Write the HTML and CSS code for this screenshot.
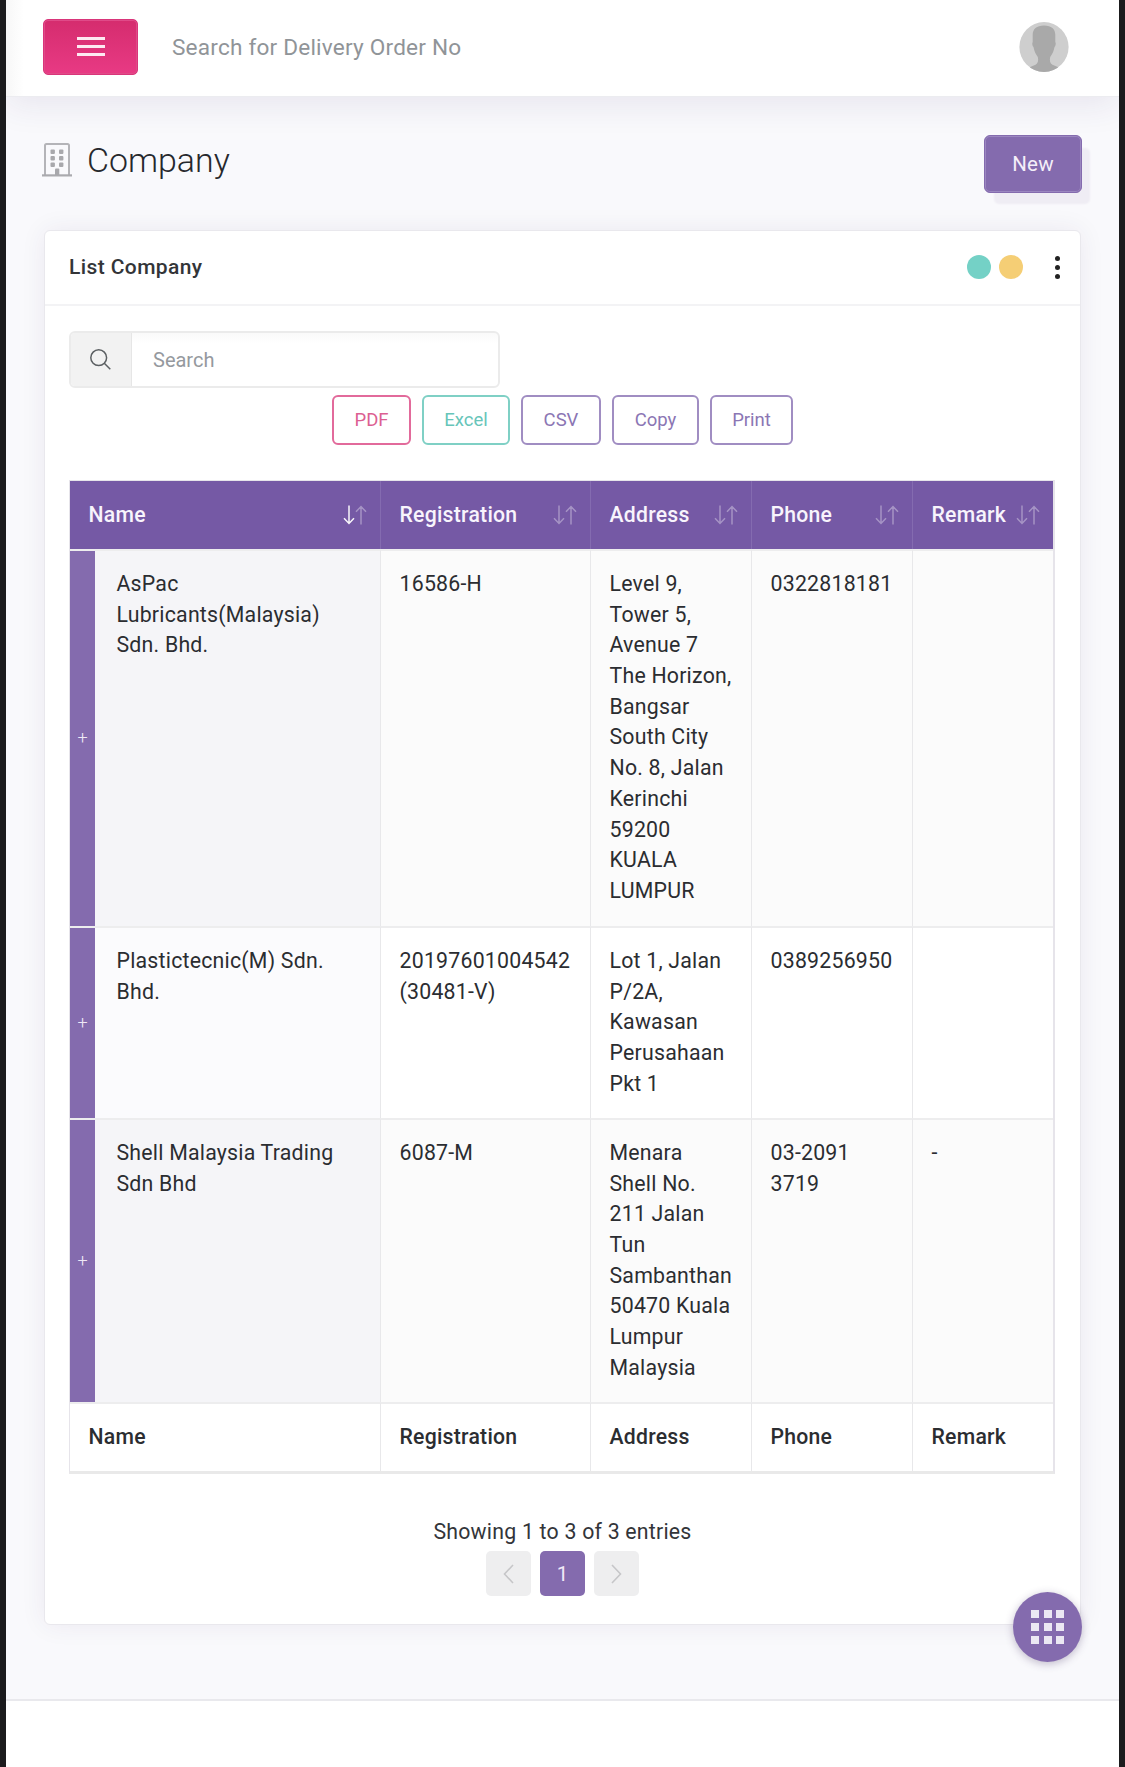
FILE: index.html
```html
<!DOCTYPE html>
<html lang="en">
<head>
<meta charset="utf-8">
<title>Company</title>
<link rel="stylesheet" href="styles.css">
</head>
<body>
<svg class="defs" width="0" height="0" aria-hidden="true">
  <symbol id="down" viewBox="0 0 12 20"><path d="M6 .5v18M1 13.2l5 5.3 5-5.3"/></symbol>
  <symbol id="up" viewBox="0 0 12 20"><path d="M6 19.5v-18M1 6.8l5-5.3 5 5.3"/></symbol>
</svg>
<div class="page">
  <header class="topbar">
    <button class="menu" aria-label="Menu"><span></span><span></span><span></span></button>
    <span class="topsearch">Search for Delivery Order No</span>
    <svg class="avatar" viewBox="0 0 50 50">
      <clipPath id="round"><ellipse cx="25" cy="25" rx="24.600" ry="24.900"/></clipPath>
      <g clip-path="url(#round)">
        <rect width="50" height="50" fill="#cecece"/>
        <path fill="#a9a9a9" d="M25 3.500C17.500 3.500 13.700 7 13.700 13v7c-.8.6-.5 4 .8 5 .6 4 2.200 7 4.300 10 .8 3.500.2 6.500-2.300 7.800L10 45.500V50h30v-4.500l-6.500-2.700c-2.500-1.300-3.100-4.300-2.300-7.800 2.100-3 3.700-6 4.300-10 1.300-1 1.600-4.400.8-5v-7c0-6-3.800-9.500-11.300-9.500z"/>
      </g>
    </svg>
  </header>

  <main class="main">
    <div class="titlebar">
      <svg class="building" viewBox="0 0 30 35">
        <path fill="none" stroke="#b4b4b8" stroke-width="2" d="M3 33V3.500Q3 2 4.500 2h21Q27 2 27 3.500V33"/>
        <path stroke="#aaaaae" stroke-width="2.200" d="M0 33.400h30"/>
        <g fill="#a8a8ac">
          <rect x="8.500" y="7.500" width="4.400" height="4.600" rx="1"/><rect x="17" y="7.500" width="4.400" height="4.600" rx="1"/>
          <rect x="8.500" y="14" width="4.400" height="4.600" rx="1"/><rect x="17" y="14" width="4.400" height="4.600" rx="1"/>
          <rect x="8.500" y="20.400" width="4.400" height="4.600" rx="1"/><rect x="17" y="20.400" width="4.400" height="4.600" rx="1"/>
          <path d="M13 33v-5.500q0-1 1-1h2.300q1 0 1 1V33z"/>
        </g>
      </svg>
      <h1>Company</h1>
      <button class="new">New</button>
    </div>

    <section class="card">
      <div class="card-head">
        <h2>List Company</h2>
        <i class="dot teal"></i><i class="dot amber"></i>
        <div class="kebab"><i></i><i></i><i></i></div>
      </div>

      <div class="search">
        <span class="search-icon"><svg width="21" height="21" viewBox="0 0 21 21"><circle cx="8.700" cy="8.700" r="7.900"/><path d="M14.300 14.300l6 6"/></svg></span>
        <span class="search-text">Search</span>
      </div>

      <div class="exports">
        <button class="pink w-pdf">PDF</button><button class="green w-excel">Excel</button><button class="w-csv">CSV</button><button class="w-copy">Copy</button><button class="w-print">Print</button>
      </div>

      <table class="grid">
        <colgroup><col class="c1"><col class="c2"><col class="c3"><col class="c4"><col class="c5"></colgroup>
        <thead>
          <tr>
            <th><div>Name<span class="sort"><svg class="on"><use href="#down"/></svg><svg><use href="#up"/></svg></span></div></th>
            <th><div>Registration<span class="sort"><svg><use href="#down"/></svg><svg><use href="#up"/></svg></span></div></th>
            <th><div>Address<span class="sort"><svg><use href="#down"/></svg><svg><use href="#up"/></svg></span></div></th>
            <th><div>Phone<span class="sort"><svg><use href="#down"/></svg><svg><use href="#up"/></svg></span></div></th>
            <th><div>Remark<span class="sort"><svg><use href="#down"/></svg><svg><use href="#up"/></svg></span></div></th>
          </tr>
        </thead>
        <tbody>
          <tr class="r1">
            <td class="name"><span class="expand">+</span>AsPac<br>Lubricants(Malaysia)<br>Sdn. Bhd.</td>
            <td>16586-H</td>
            <td>Level 9,<br>Tower 5,<br>Avenue 7<br>The Horizon,<br>Bangsar<br>South City<br>No. 8, Jalan<br>Kerinchi<br>59200<br>KUALA<br>LUMPUR</td>
            <td>0322818181</td>
            <td></td>
          </tr>
          <tr class="r2">
            <td class="name"><span class="expand">+</span>Plastictecnic(M) Sdn.<br>Bhd.</td>
            <td>20197601004542<br>(30481-V)</td>
            <td>Lot 1, Jalan<br>P/2A,<br>Kawasan<br>Perusahaan<br>Pkt 1</td>
            <td>0389256950</td>
            <td></td>
          </tr>
          <tr class="r3">
            <td class="name"><span class="expand">+</span>Shell Malaysia Trading<br>Sdn Bhd</td>
            <td>6087-M</td>
            <td>Menara<br>Shell No.<br>211 Jalan<br>Tun<br>Sambanthan<br>50470 Kuala<br>Lumpur<br>Malaysia</td>
            <td>03-2091<br>3719</td>
            <td>-</td>
          </tr>
        </tbody>
        <tfoot>
          <tr><th>Name</th><th>Registration</th><th>Address</th><th>Phone</th><th>Remark</th></tr>
        </tfoot>
      </table>

      <p class="info">Showing 1 to 3 of 3 entries</p>
      <nav class="pager">
        <span><svg width="11" height="20" viewBox="0 0 11 20"><path d="M10 1L1.500 10 10 19"/></svg></span>
        <span class="current">1</span>
        <span><svg width="11" height="20" viewBox="0 0 11 20"><path d="M1 1l8.500 9L1 19"/></svg></span>
      </nav>
    </section>
  </main>
  <footer class="footer"></footer>
  <button class="fab" aria-label="Apps"><i></i><i></i><i></i><i></i><i></i><i></i><i></i><i></i><i></i></button>
</div>
</body>
</html>
```
FILE: styles.css
```css
* { box-sizing: border-box; }
body {
  margin: 0;
  background: #1b1b1d;
  font-family: Roboto, "Liberation Sans", sans-serif;
  font-size: 21.300px;
  letter-spacing: .22px;
  color: #2b2d31;
}
button { font: inherit; letter-spacing: inherit; padding: 0; margin: 0; }
h1, h2, p { margin: 0; }
.defs { position: absolute; }
.page {
  position: relative;
  margin: 0 6px;
  height: 1767px;
  background: #f9f9fc;
  display: flex;
  flex-direction: column;
  overflow: hidden;
}

.topbar {
  position: relative;
  z-index: 1;
  height: 97px;
  padding: 0 50px 3px 37px;
  display: flex;
  align-items: center;
  background: linear-gradient(90deg, #f7f7f7, #fff 18px);
  border-bottom: 1px solid #ececf0;
  box-shadow: 0 8px 34px rgba(60, 30, 100, .09);
}
.menu {
  width: 95px;
  height: 56px;
  border: 1px solid #d9357a;
  border-radius: 5px;
  background: linear-gradient(#d52c6e, #e83a84);
  box-shadow: inset 0 0 0 1px #e04a88;
  display: flex;
  flex-direction: column;
  align-items: center;
  justify-content: center;
  gap: 5px;
}
.menu span { width: 28px; height: 3px; background: #fdeaf2; }
.topsearch { margin: 1px 0 0 34px; font-size: 22.600px; letter-spacing: .2px; color: #909498; }
.avatar { width: 50px; height: 50px; margin-left: auto; }

.main { height: 1602px; padding: 38px 38px 0; }
.titlebar { display: flex; height: 95px; align-items: flex-start; }
.building { width: 30px; height: 35px; margin: 7px 0 0 -2px; }
h1 { margin: 6px 0 0 15px; font-size: 33.900px; line-height: 40px; font-weight: 300; letter-spacing: 0; color: #26282c; }
.new {
  width: 98px;
  height: 58px;
  margin-left: auto;
  margin-right: -1px;
  border: 1px solid #846bae;
  border-radius: 6px;
  background: #846bae;
  box-shadow: inset 0 0 0 1px #9b87c0, 9px 12px 2px -1px #efedf4;
  color: #f4eff9;
  font-size: 20.500px;
}

.card {
  height: 1395px;
  padding: 0 25px;
  border: 1px solid #e9e8ed;
  border-radius: 6px;
  background: #fff;
  box-shadow: 0 0 26px rgba(60, 30, 80, .07);
}
.card-head {
  height: 75px;
  margin: 0 -25px;
  padding: 0 20px 1px 24px;
  border-bottom: 2px solid #f3f3f5;
  display: flex;
  align-items: center;
}
h2 { margin-right: auto; font-size: 21px; font-weight: 500; letter-spacing: .4px; color: #333538; }
.dot { width: 24px; height: 24px; border-radius: 50%; margin-right: 8px; }
.teal { background: #74d1c6; }
.amber { background: #f5ce75; }
.kebab { display: flex; flex-direction: column; gap: 4px; margin-left: 24px; }
.kebab i { width: 5px; height: 5px; border-radius: 50%; background: #222; }

.search {
  display: flex;
  width: 431px;
  height: 57px;
  margin-top: 25px;
  margin-left: -1px;
  border: 2px solid #ebebeb;
  border-radius: 6px;
  overflow: hidden;
  background: linear-gradient(#fafafa, #fff 10px);
}
.search-icon { width: 61px; padding-right: 2px; background: #f2f2f2; border-right: 1px solid #e6e6e6; display: flex; align-items: center; justify-content: center; }
.search-icon svg { fill: none; stroke: #5c6063; stroke-width: 1.500; }
.search-text { padding-left: 21px; line-height: 55px; font-size: 20px; letter-spacing: 0; color: #95999e; }

.exports { display: flex; gap: 11px; height: 50px; margin-top: 7px; padding-left: 262px; }
.exports button {
  border: 2px solid #a08dc2;
  border-radius: 6px;
  background: #fff;
  color: #8b76b4;
  font-size: 18.500px;
  letter-spacing: 0;
}
.exports .pink { border-color: #e26a9b; color: #dc5f92; }
.exports .green { border-color: #7fd0c5; color: #67c5b9; }
.w-pdf { width: 79px; }
.w-excel { width: 88px; }
.w-csv { width: 80px; }
.w-copy { width: 87px; }
.w-print { width: 83px; }

.grid {
  width: 986px;
  margin-top: 35px;
  margin-left: -1px;
  table-layout: fixed;
  border-collapse: separate;
  border-spacing: 0;
  border: 1px solid #e6e4ea;
  border-right-width: 2px;
  border-bottom: 3px solid #e9e9e9;
}
.c1 { width: 310px; }
.c2 { width: 210px; }
.c3 { width: 161px; }
.c4 { width: 161px; }
.c5 { width: 141px; }
.grid td, .grid th {
  padding: 18px 0 0 18.500px;
  border-left: 1px solid #e8e8ea;
  text-align: left;
  vertical-align: top;
  line-height: 30.680px;
  white-space: nowrap;
}
.grid th { padding: 0 0 0 18.500px; vertical-align: middle; font-weight: 500; font-size: 21.200px; letter-spacing: .25px; }
.grid tr > :first-child { border-left: 0; }
thead tr { height: 68px; }
.grid thead th { background: #7559a5; color: #f8f4fc; border-left-color: #846bb0; }
thead th div { display: flex; align-items: center; padding-right: 13px; }
.sort { display: flex; margin-left: auto; }
.sort svg { width: 12px; height: 20px; fill: none; stroke: #fff; stroke-width: 1.500; opacity: .35; }
.sort svg.on { opacity: .95; }
.r1 { height: 377px; }
.r2 { height: 192px; }
.r3 { height: 284px; }
tbody td, tfoot th { border-top: 2px solid #ededee; }
.r1 td, .r3 td { background: #fbfbfb; }
.r1 .name, .r3 .name { background: #f5f5f8; }
.r2 .name { background: #fbfbfd; }
.grid td.name { position: relative; padding-left: 46.500px; }
.expand {
  position: absolute;
  left: 0;
  top: 0;
  bottom: 0;
  width: 25px;
  background: #846bae;
  color: #efe8f6;
  font-size: 18px;
  font-weight: 300;
  letter-spacing: 0;
  display: flex;
  align-items: center;
  justify-content: center;
}
tfoot tr { height: 69px; }

.info { margin-top: 42px; line-height: 32px; text-align: center; color: #333539; }
.pager { display: flex; justify-content: center; gap: 9px; margin-top: 3px; }
.pager span { width: 45px; height: 45px; border-radius: 5px; background: #eeeeef; display: flex; align-items: center; justify-content: center; }
.pager svg { fill: none; stroke: #c6c6c8; stroke-width: 1.600; }
.pager .current { background: #846bae; color: #f0e9f7; font-size: 20.500px; }

.footer { flex: 1; background: #fff; border-top: 2px solid #e9e9ed; }
.fab {
  position: absolute;
  left: 1007px;
  top: 1592px;
  width: 69px;
  height: 70px;
  padding: 18px;
  border: 0;
  border-radius: 50%;
  background: #846bae;
  box-shadow: 0 2px 8px rgba(60, 40, 90, .3);
  display: grid;
  grid-template-columns: repeat(3, 8px);
  grid-template-rows: repeat(3, 8px);
  gap: 5px 4.500px;
  place-content: center;
}
.fab i { background: #ebe8f3; }
```
